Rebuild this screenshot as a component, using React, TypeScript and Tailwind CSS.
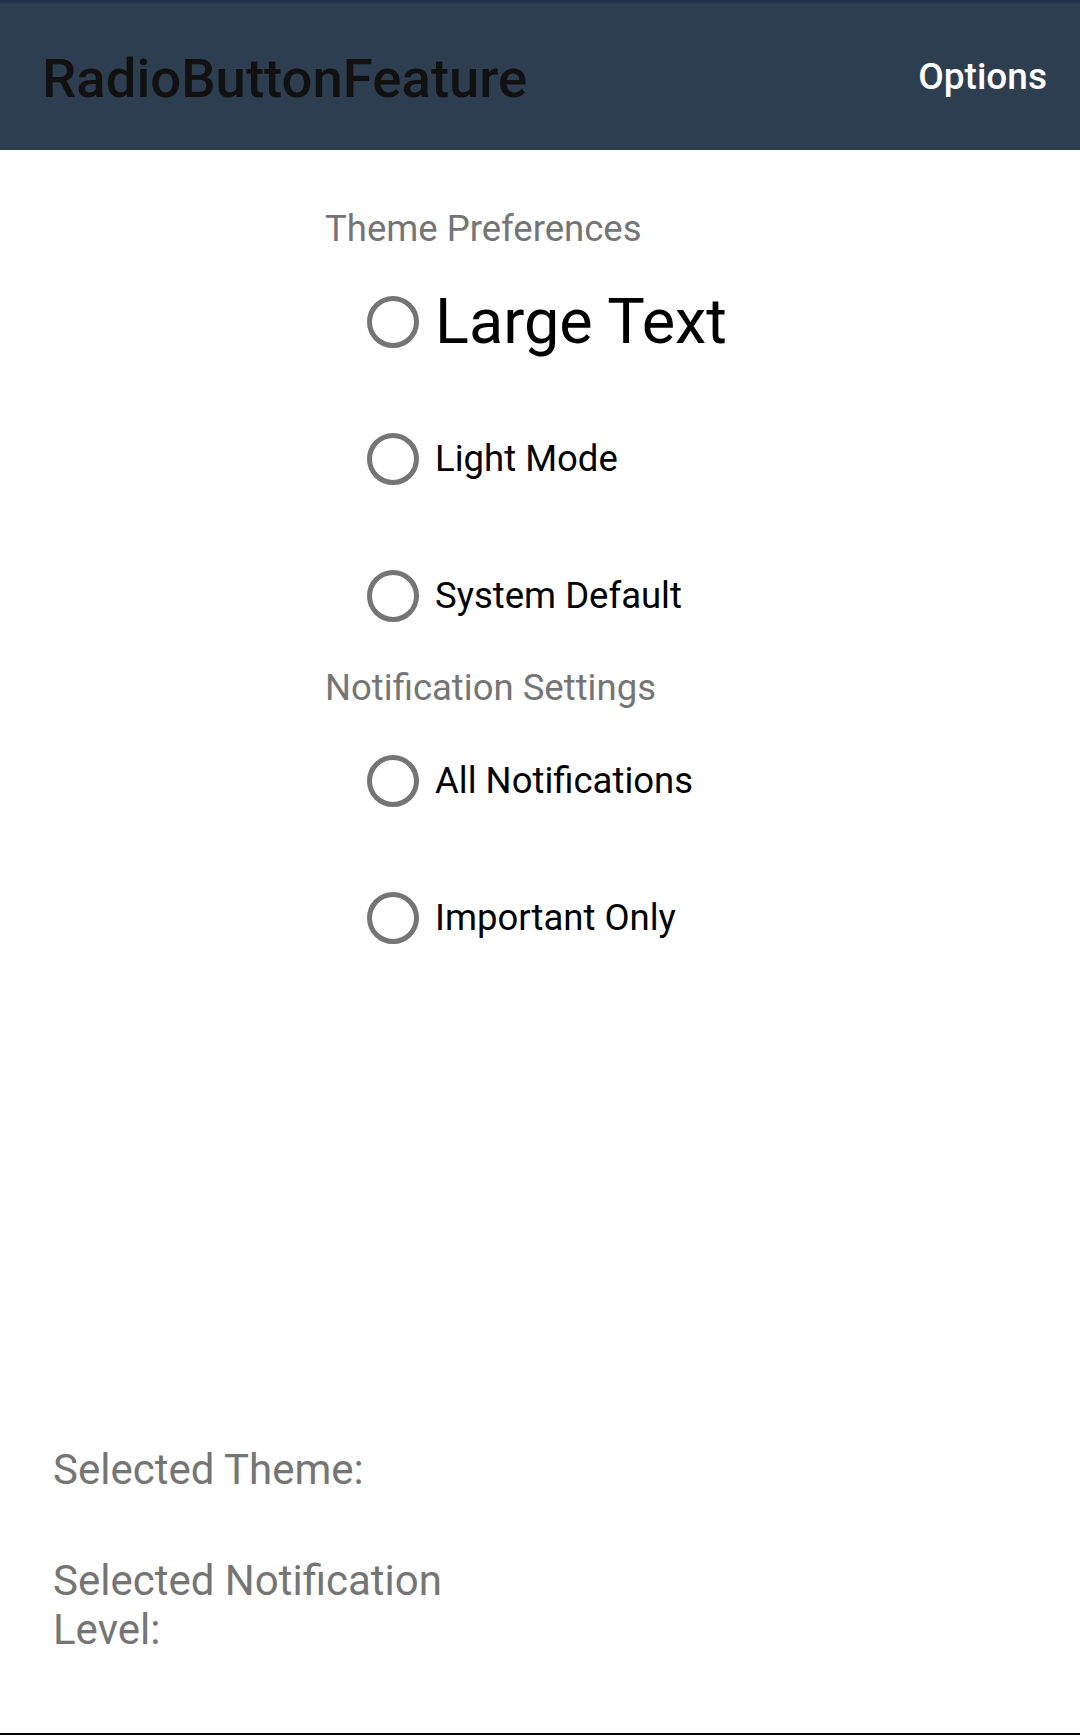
import { useState } from "react";

type Option = { id: string; label: string; large?: boolean };

const themeOptions: Option[] = [
  { id: "large", label: "Large Text", large: true },
  { id: "light", label: "Light Mode" },
  { id: "system", label: "System Default" },
];

const notificationOptions: Option[] = [
  { id: "all", label: "All Notifications" },
  { id: "important", label: "Important Only" },
];

function RadioRow({
  option,
  checked,
  onSelect,
}: {
  option: Option;
  checked: boolean;
  onSelect: () => void;
}) {
  return (
    <div
      className="flex h-[137px] cursor-pointer items-center gap-[16px] pl-[367px]"
      role="radio"
      aria-checked={checked}
      onClick={onSelect}
    >
      <span
        className={`flex h-[52px] w-[52px] shrink-0 items-center justify-center rounded-full border-[5px] ${
          checked ? "border-[#2d3e50]" : "border-[#757575]"
        }`}
      >
        {checked && <span className="h-[26px] w-[26px] rounded-full bg-[#2d3e50]" />}
      </span>
      <span
        className={`text-black ${
          option.large ? "text-[63px] leading-[74px]" : "text-[36.5px] leading-[44px]"
        }`}
      >
        {option.label}
      </span>
    </div>
  );
}

function SectionTitle({ children }: { children: string }) {
  return (
    <div className="flex h-[48px] items-center pl-[325px] text-[36.5px] leading-[44px] text-[#757575]">
      {children}
    </div>
  );
}

export default function App() {
  const [theme, setTheme] = useState<string | null>(null);
  const [level, setLevel] = useState<string | null>(null);

  const themeLabel = themeOptions.find((o) => o.id === theme)?.label ?? "";
  const levelLabel = notificationOptions.find((o) => o.id === level)?.label ?? "";

  return (
    <div className="flex h-[1735px] w-[1080px] flex-col border-b-2 border-black bg-white font-['Roboto',sans-serif]">
      {/* App bar */}
      <header className="flex h-[150px] shrink-0 flex-col bg-[#2d3e50]">
        <div className="h-[3px] bg-[#1e354d]" />
        <div className="flex flex-1 items-center justify-between pl-[42px] pr-[33px]">
          <h1 className="pt-[3px] text-[54.5px] font-medium leading-[62px] text-[#111111]">RadioButtonFeature</h1>
          <button className="text-[37px] font-medium leading-[44px] text-white">Options</button>
        </div>
      </header>

      <main className="flex flex-1 flex-col pt-[55px]">
        <SectionTitle>Theme Preferences</SectionTitle>
        {themeOptions.map((o) => (
          <RadioRow key={o.id} option={o} checked={theme === o.id} onSelect={() => setTheme(o.id)} />
        ))}
        <SectionTitle>Notification Settings</SectionTitle>
        {notificationOptions.map((o) => (
          <RadioRow key={o.id} option={o} checked={level === o.id} onSelect={() => setLevel(o.id)} />
        ))}

        {/* Selection summary */}
        <div className="mt-auto flex flex-col gap-[62px] pb-[79px] pl-[53px] text-[42px] leading-[49px] text-[#757575]">
          <div className="flex">
            <span className="w-[470px]">Selected Theme:</span>
            <span>{themeLabel}</span>
          </div>
          <div className="flex">
            <span className="w-[470px]">Selected Notification Level:</span>
            <span>{levelLabel}</span>
          </div>
        </div>
      </main>
    </div>
  );
}
